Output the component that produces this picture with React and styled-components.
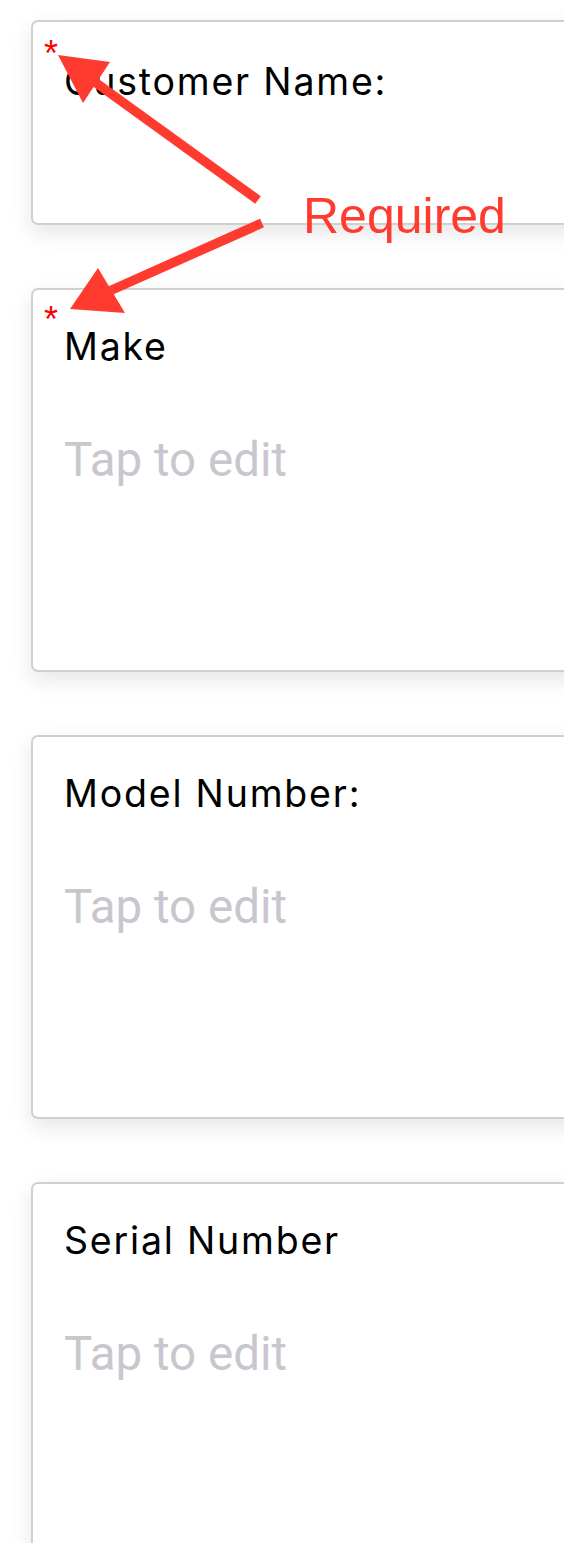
import React from "react";
import styled, { createGlobalStyle } from "styled-components";

const Global = createGlobalStyle`
  html, body { margin: 0; padding: 0; background: #ffffff; overflow: hidden; }
  body { width: 564px; }
`;

const Page = styled.div`
  position: relative;
  width: 564px;
  height: 1543px;
  overflow: hidden;
  padding: 20px 0 0 31px;
  box-sizing: border-box;
`;

const List = styled.div`
  display: flex;
  flex-direction: column;
  gap: 63px;
  width: 620px;
`;

const Card = styled.div`
  position: relative;
  box-sizing: border-box;
  height: ${(p) => p.$h}px;
  background: #ffffff;
  border: 2px solid #d0d0d0;
  border-radius: 7px;
  box-shadow: 0 8px 22px rgba(0, 0, 0, 0.1);
  padding: ${(p) => p.$pt}px 0 0 31px;
  display: flex;
  flex-direction: column;
`;

const Label = styled.div`
  font-family: Inter, "Liberation Sans", sans-serif;
  font-size: 37.5px;
  line-height: 44px;
  color: #000000;
  letter-spacing: 1.8px;
`;

const RequiredMark = styled.span`
  position: absolute;
  left: 11px;
  top: ${(p) => p.$top}px;
  font-family: "Liberation Sans", sans-serif;
  font-size: 36px;
  line-height: 36px;
  color: #ff0000;
`;

const Placeholder = styled.div`
  margin-top: 63px;
  font-family: Roboto, sans-serif;
  font-size: 47.5px;
  line-height: 56px;
  color: #c7c7cd;
`;

const Overlay = styled.svg`
  position: absolute;
  left: 0;
  top: 0;
  pointer-events: none;
`;

const Annotation = styled.span`
  position: absolute;
  left: 303px;
  top: 186px;
  font-family: "Liberation Sans", Arial, sans-serif;
  font-size: 50px;
  line-height: 60px;
  color: #ff3b30;
`;

const fields = [
  { label: "Customer Name:", required: true, h: 205, placeholder: false, pt: 38, mark: 14 },
  { label: "Make", required: true, h: 384, placeholder: true, pt: 35, mark: 12 },
  { label: "Model Number:", required: false, h: 384, placeholder: true, pt: 35 },
  { label: "Serial Number", required: false, h: 420, placeholder: true, pt: 35 },
];

export default function App() {
  return (
    <>
      <Global />
      <Page>
        <List>
          {fields.map((f) => (
            <Card key={f.label} $h={f.h} $pt={f.pt}>
              {f.required && <RequiredMark $top={f.mark}>*</RequiredMark>}
              <Label>{f.label}</Label>
              {f.placeholder && <Placeholder>Tap to edit</Placeholder>}
            </Card>
          ))}
        </List>
        <Overlay width="564" height="340" viewBox="0 0 564 340">
          <g fill="#ff3b30" stroke="#ff3b30">
            <line x1="258" y1="200" x2="92" y2="80" strokeWidth="9.5" />
            <polygon points="58,55 110,62 83,103" stroke="none" />
            <line x1="262" y1="223" x2="105" y2="293" strokeWidth="9.5" />
            <polygon points="70,309 98,268 125,313" stroke="none" />
          </g>
        </Overlay>
        <Annotation>Required</Annotation>
      </Page>
    </>
  );
}
